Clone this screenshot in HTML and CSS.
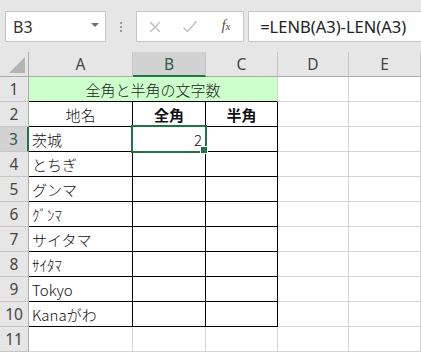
FILE: index.html
```html
<!DOCTYPE html>
<html>
<head>
  <title>全角と半角の文字数</title>
  <link rel="stylesheet" href="styles.css">
</head>
<body>
  <div class="formula-bar">
    <div class="name-box"><span>B3</span><span class="caret"></span></div>
    <div class="grip"><i></i><i></i><i></i></div>
    <div class="cmd-box">
      <svg class="cmd" width="14" height="14" viewBox="0 0 14 14"><path d="M2 2L12 12M12 2L2 12" stroke="#c2c2c2" stroke-width="1.5" fill="none"/></svg>
      <svg class="cmd" width="16" height="14" viewBox="0 0 16 14"><path d="M1.5 7.5L5.5 11.5L14.5 1.5" stroke="#c2c2c2" stroke-width="1.5" fill="none"/></svg>
      <span class="fx">f<small>x</small></span>
    </div>
    <div class="formula">=LENB(A3)-LEN(A3)</div>
  </div>

  <div class="sheet">
    <div class="grid">
      <!-- header -->
      <div class="cell hd corner">
        <svg width="18" height="18" viewBox="0 0 18 18"><polygon points="17,1 17,17 1,17" fill="#b4b4b4"/></svg>
      </div>
      <div class="cell hd col-hd">A</div>
      <div class="cell hd col-hd sel-col">B</div>
      <div class="cell hd col-hd">C</div>
      <div class="cell hd col-hd">D</div>
      <div class="cell hd col-hd">E</div>

      <!-- row 1 -->
      <div class="cell hd row-hd">1</div>
      <div class="cell title">全角と半角の文字数</div>
      <div class="cell"></div>
      <div class="cell"></div>

      <!-- row 2 -->
      <div class="cell hd row-hd">2</div>
      <div class="cell tb center">地名</div>
      <div class="cell tb center bold">全角</div>
      <div class="cell tb center bold">半角</div>
      <div class="cell"></div>
      <div class="cell"></div>

      <!-- row 3 -->
      <div class="cell hd row-hd sel-row">3</div>
      <div class="cell tb">茨城</div>
      <div class="cell tb num">2</div>
      <div class="cell tb"></div>
      <div class="cell"></div>
      <div class="cell"></div>

      <div class="cell hd row-hd">4</div>
      <div class="cell tb">とちぎ</div>
      <div class="cell tb"></div>
      <div class="cell tb"></div>
      <div class="cell"></div>
      <div class="cell"></div>

      <div class="cell hd row-hd">5</div>
      <div class="cell tb">グンマ</div>
      <div class="cell tb"></div>
      <div class="cell tb"></div>
      <div class="cell"></div>
      <div class="cell"></div>

      <div class="cell hd row-hd">6</div>
      <div class="cell tb">ｸﾞﾝﾏ</div>
      <div class="cell tb"></div>
      <div class="cell tb"></div>
      <div class="cell"></div>
      <div class="cell"></div>

      <div class="cell hd row-hd">7</div>
      <div class="cell tb">サイタマ</div>
      <div class="cell tb"></div>
      <div class="cell tb"></div>
      <div class="cell"></div>
      <div class="cell"></div>

      <div class="cell hd row-hd">8</div>
      <div class="cell tb">ｻｲﾀﾏ</div>
      <div class="cell tb"></div>
      <div class="cell tb"></div>
      <div class="cell"></div>
      <div class="cell"></div>

      <div class="cell hd row-hd">9</div>
      <div class="cell tb">Tokyo</div>
      <div class="cell tb"></div>
      <div class="cell tb"></div>
      <div class="cell"></div>
      <div class="cell"></div>

      <div class="cell hd row-hd">10</div>
      <div class="cell tb">Kanaがわ</div>
      <div class="cell tb"></div>
      <div class="cell tb"></div>
      <div class="cell"></div>
      <div class="cell"></div>

      <div class="cell hd row-hd">11</div>
      <div class="cell"></div>
      <div class="cell"></div>
      <div class="cell"></div>
      <div class="cell"></div>
      <div class="cell"></div>
    </div>

    <div class="selection"><span class="handle"></span></div>
  </div>
</body>
</html>
```

FILE: styles.css
```css
html, body {
  margin: 0;
  padding: 0;
  overflow: hidden;
}
body {
  width: 421px;
  height: 352px;
  background: #e6e6e6;
  font-family: "Noto Sans CJK JP", sans-serif;
  color: #000;
}

/* formula bar */
.formula-bar {
  display: flex;
  align-items: flex-start;
  height: 52px;
  padding-top: 11px;
  box-sizing: border-box;
  background: #e6e6e6;
}
.name-box {
  width: 102px;
  height: 31px;
  margin-left: 5px;
  box-sizing: border-box;
  background: #fff;
  border: 1px solid #c6c6c6;
  display: flex;
  align-items: center;
  justify-content: space-between;
  padding: 0 6px 0 7px;
  font-family: "Noto Sans", sans-serif;
  font-size: 16px;
  color: #333;
}
.caret {
  width: 0;
  height: 0;
  border-left: 4px solid transparent;
  border-right: 4px solid transparent;
  border-top: 4px solid #707070;
  margin-top: -3px;
}
.grip {
  width: 31px;
  height: 31px;
  display: flex;
  flex-direction: column;
  align-items: center;
  justify-content: center;
  gap: 2px;
}
.grip i {
  display: block;
  width: 2px;
  height: 2px;
  background: #9a9a9a;
}
.cmd-box {
  width: 109px;
  height: 31px;
  box-sizing: border-box;
  background: #fff;
  border: 1px solid #c6c6c6;
  display: flex;
  align-items: center;
  padding-left: 11px;
}
.cmd {
  display: block;
}
.cmd + .cmd {
  margin-left: 20px;
}
.fx {
  margin-left: 23px;
  font-family: "Liberation Serif", serif;
  font-style: italic;
  font-size: 15px;
  color: #555;
  margin-top: -2px;
}
.fx small {
  font-size: 11px;
}
.formula {
  width: 175px;
  height: 31px;
  margin-left: 4px;
  box-sizing: border-box;
  background: #fff;
  border: 1px solid #c6c6c6;
  border-right: none;
  padding-left: 11px;
  display: flex;
  align-items: center;
  font-family: "Noto Sans", sans-serif;
  font-size: 16.5px;
  color: #222;
  white-space: nowrap;
}

/* sheet */
.sheet {
  position: relative;
  background: #fff;
}
.grid {
  display: grid;
  grid-template-columns: 29px 104px 73px 72px 71px 72px;
  grid-auto-rows: 25px;
}
.cell {
  box-sizing: border-box;
  border-right: 1px solid #d4d4d4;
  border-bottom: 1px solid #d4d4d4;
  display: flex;
  align-items: center;
  padding: 0 3px;
  font-size: 15px;
  font-weight: 300;
  color: #111;
  white-space: nowrap;
  overflow: hidden;
}
.hd {
  background: #e6e6e6;
  justify-content: center;
  padding: 0;
  font-family: "Noto Sans", sans-serif;
  font-size: 15.5px;
  font-weight: 400;
  color: #444;
}
.corner {
  border-right-color: #ababab;
  border-bottom-color: #ababab;
  align-items: flex-end;
  justify-content: flex-end;
  padding: 0 2px 2px 0;
}
.corner svg {
  display: block;
}
.col-hd {
  border-right-color: #c6c6c6;
  border-bottom-color: #ababab;
}
.row-hd {
  border-right-color: #ababab;
  border-bottom-color: #c6c6c6;
}
.sel-col {
  background: #d2d2d2;
  border-bottom: 2px solid #217346;
  color: #2d5f45;
}
.sel-row {
  background: #d2d2d2;
  border-right: 2px solid #217346;
  color: #2d5f45;
}
.title {
  grid-column: span 3;
  background: #ccffcc;
  justify-content: center;
  border-bottom-color: #000;
  color: #222;
}
.tb {
  border-right-color: #000;
  border-bottom-color: #000;
}
.center {
  justify-content: center;
}
.bold {
  font-weight: 700;
}
.num {
  justify-content: flex-end;
}

/* active cell */
.selection {
  position: absolute;
  left: 131px;
  top: 73px;
  width: 76px;
  height: 28px;
  box-sizing: border-box;
  border: 2px solid #217346;
}
.handle {
  position: absolute;
  right: -2px;
  bottom: -2px;
  width: 6px;
  height: 6px;
  background: #217346;
  box-shadow: 0 0 0 1px #fff;
}
```
